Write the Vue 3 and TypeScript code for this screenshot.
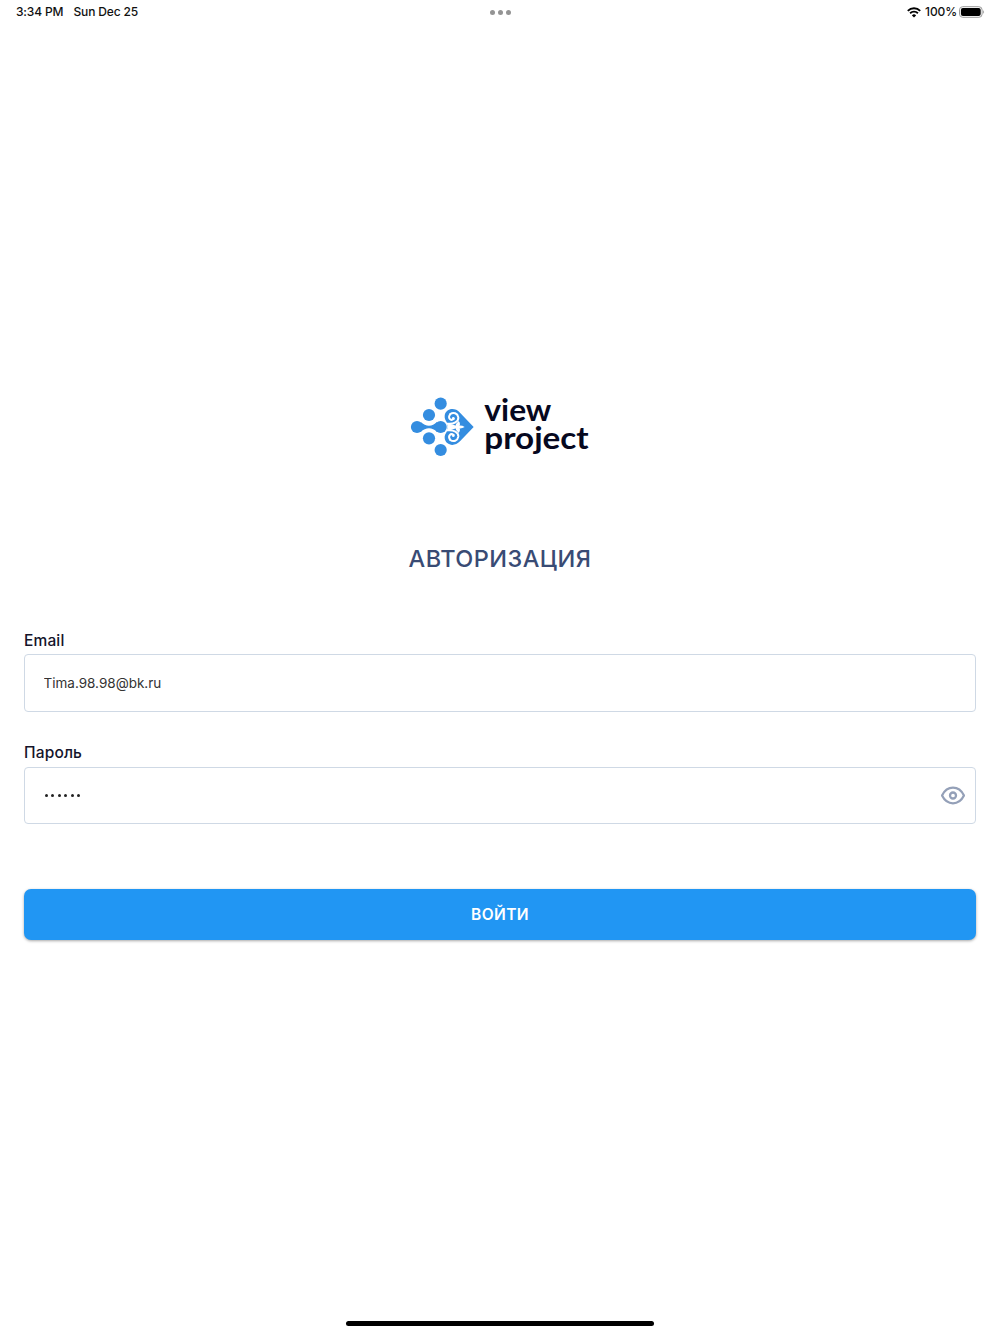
<script setup lang="ts">
import { ref } from 'vue'

const email = ref('Tima.98.98@bk.ru')
const passwordLength = 6

const logoDots = [
  { x: 122, y: 56 },
  { x: 87, y: 90 },
  { x: 51, y: 126 },
  { x: 122, y: 126 },
  { x: 87, y: 160 },
  { x: 122, y: 195 },
]
</script>

<template>
  <div class="screen">
    <header class="status">
      <div class="status-side">
        <span class="time">3:34 PM</span>
        <span class="date">Sun Dec 25</span>
      </div>
      <div class="multitask"><i v-for="n in 3" :key="n" /></div>
      <div class="status-side end">
        <svg class="wifi" width="14" height="11" viewBox="0 0 14 11">
          <path d="M.8 3.800A8.800 8.800 0 0 1 13.200 3.800" />
          <path d="M3.100 6.200a5.600 5.600 0 0 1 7.800 0" />
          <path class="solid" d="M7 10.500 4.900 8.400a3 3 0 0 1 4.200 0z" />
        </svg>
        <span class="percent">100%</span>
        <svg class="battery" width="26" height="12" viewBox="0 0 26 12">
          <rect x=".5" y=".7" width="22.600" height="10.600" rx="3.200" fill="none" stroke="#9b9b9b" />
          <rect x="1.900" y="2.100" width="19.800" height="7.800" rx="2" fill="#000" />
          <path d="M24.200 4.300c1.200.6 1.200 2.800 0 3.400z" fill="#9b9b9b" />
        </svg>
      </div>
    </header>

    <main class="content">
      <svg class="logo" width="200" height="85" viewBox="0 0 600 255">
        <g fill="#348de0">
          <path d="M62 111Q74 122 87 122T111 111V141Q100 130 87 130T62 141z" />
          <path d="M221 126 180 83C163 65 137 71 134 92C133 101 137 106 141 113Q146 126 141 139C137 146 133 151 134 160C137 181 163 187 180 169z" />
        </g>
        <g fill="none" stroke="#fff" stroke-width="6" stroke-linecap="round">
          <path d="M151 87C160 80 173 85 175 97C176 110 161 118 143 116" />
          <path d="M151 165C160 172 173 167 175 155C176 142 161 134 143 136" />
          <path d="M151 87C142 99 152 109 161 102" />
          <path d="M151 165C142 153 152 143 161 150" />
        </g>
        <g fill="#fff">
          <circle cx="160" cy="100" r="4" />
          <circle cx="160" cy="152" r="4" />
          <path d="M141 113Q158 119 171 123Q184 119 194 126Q184 133 171 129Q158 133 141 139Q146 126 141 113z" />
          <path d="M166 126Q166 116 176 108Q184 118 176 126Q184 134 176 144Q166 136 166 126z" />
        </g>
        <g fill="#348de0">
          <circle v-for="(dot, i) in logoDots" :key="i" :cx="dot.x" :cy="dot.y" r="18.3" />
        </g>
        <g class="wordmark">
          <text x="253" y="109" textLength="201" lengthAdjust="spacingAndGlyphs">view</text>
          <text x="253" y="192" textLength="313" lengthAdjust="spacingAndGlyphs">project</text>
        </g>
      </svg>

      <h1>АВТОРИЗАЦИЯ</h1>

      <form @submit.prevent>
        <label for="email">Email</label>
        <div class="field">
          <input id="email" v-model="email" type="text" spellcheck="false" />
        </div>

        <label class="second" for="password">Пароль</label>
        <div id="password" class="field">
          <div class="dots"><i v-for="n in passwordLength" :key="n" /></div>
          <svg class="eye" width="24" height="19" viewBox="0 -.5 24 19">
            <path d="M1 9C3.500 4 7.500 1.200 12 1.200S20.500 4 23 9C20.500 14 16.500 16.800 12 16.800S3.500 14 1 9z" />
            <circle cx="12" cy="9" r="3" />
          </svg>
        </div>

        <button type="submit">ВОЙТИ</button>
      </form>
    </main>

    <footer><div class="home" /></footer>
  </div>
</template>

<style>
body {
  margin: 0;
  background: #fff;
}
</style>

<style scoped>
.screen {
  box-sizing: border-box;
  height: 1334px;
  display: flex;
  flex-direction: column;
  background: #fff;
  font-family: Inter, "Liberation Sans", sans-serif;
}
.status {
  height: 24px;
  padding: 0 15px 0 16px;
  display: flex;
  align-items: center;
  justify-content: space-between;
  font-size: 12px;
  line-height: 24px;
  font-weight: 500;
  color: #111;
}
.status-side {
  width: 200px;
  display: flex;
  align-items: center;
}
.time {
  width: 57.5px;
  letter-spacing: -0.15px;
}
.date {
  letter-spacing: -0.15px;
}
.end {
  justify-content: flex-end;
}
.wifi {
  margin-right: 4px;
  fill: none;
  stroke: #000;
  stroke-width: 1.9;
}
.wifi .solid {
  fill: #000;
  stroke: none;
}
.percent {
  margin-right: 2px;
  letter-spacing: -0.1px;
}
.multitask {
  height: 24px;
  margin-left: -1px;
  display: flex;
  gap: 3px;
}
.multitask i {
  width: 5px;
  height: 5px;
  margin-top: 9.5px;
  border-radius: 50%;
  background: #949494;
}
.content {
  flex: 1;
  padding: 361px 24px 0;
  display: flex;
  flex-direction: column;
  align-items: center;
}
.logo {
  display: block;
}
.wordmark {
  font: 700 92px Lato, sans-serif;
  fill: #060820;
}
h1 {
  margin: 74px 0 0;
  font-size: 23.5px;
  line-height: 30px;
  font-weight: 450;
  letter-spacing: 0.45px;
  color: #394b74;
}
form {
  width: 100%;
  margin-top: 55px;
  display: flex;
  flex-direction: column;
}
label {
  height: 20px;
  margin-bottom: 5px;
  font-size: 15.5px;
  line-height: 23px;
  font-weight: 500;
  letter-spacing: 0.15px;
  color: #14142b;
}
.second {
  margin-top: 30px;
  line-height: 21.5px;
}
.field {
  box-sizing: border-box;
  height: 57.5px;
  padding: 0 10px 0 18.5px;
  display: flex;
  align-items: center;
  justify-content: space-between;
  border: 1px solid #cfd9e5;
  border-radius: 4px;
}
input {
  flex: 1;
  padding: 0;
  border: 0;
  outline: 0;
  background: transparent;
  font: 400 13.5px Inter, sans-serif;
  color: #333;
}
.dots {
  display: flex;
  gap: 3.5px;
  padding-left: 1px;
}
.dots i {
  width: 3px;
  height: 3px;
  border-radius: 50%;
  background: #222;
}
.eye {
  fill: none;
  stroke: #94a0b8;
  stroke-width: 2.3;
}
button {
  height: 51.5px;
  margin-top: 64.5px;
  padding: 0;
  border: 0;
  border-radius: 7px;
  background: #2196f3;
  box-shadow: 0 1px 3px rgba(0, 0, 0, 0.35);
  color: #fff;
  font: 600 15.5px Inter, sans-serif;
  letter-spacing: 0.4px;
}
footer {
  height: 13px;
  display: flex;
  justify-content: center;
}
.home {
  width: 308px;
  height: 5px;
  border-radius: 3px;
  background: #000;
}
</style>
